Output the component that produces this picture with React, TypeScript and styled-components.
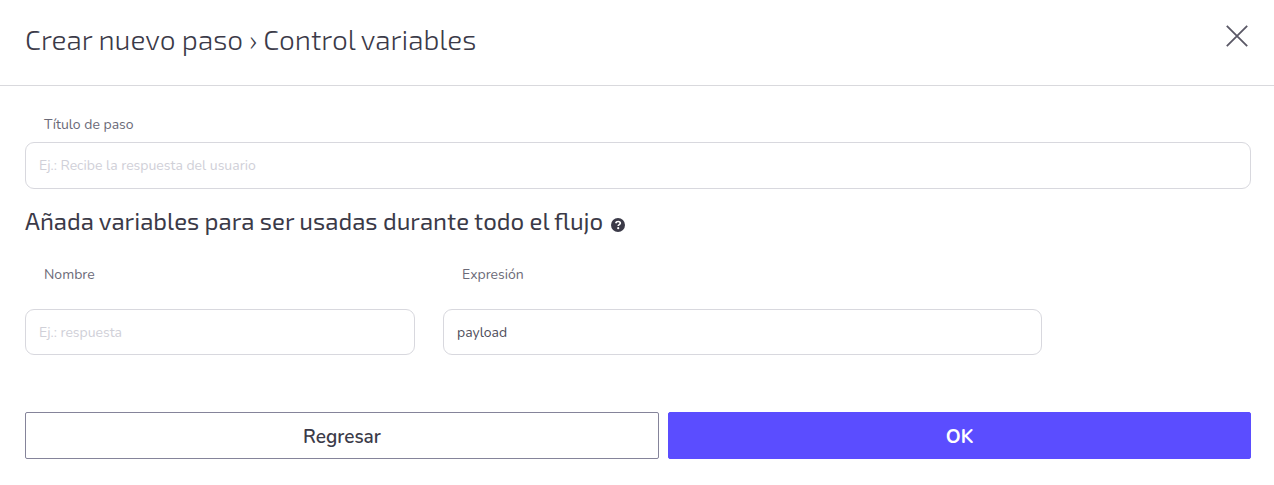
import React from "react";
import styled, { createGlobalStyle } from "styled-components";

const GlobalStyle = createGlobalStyle`
  *, *::before, *::after { box-sizing: border-box; }
  body {
    margin: 0;
    background: #fff;
    font-family: Nunito, Lato, "Open Sans", sans-serif;
    color: #3b3a48;
  }
`;

const Dialog = styled.main`
  background: #fff;
`;

const Header = styled.header`
  display: flex;
  align-items: flex-start;
  justify-content: space-between;
  padding: 19px 25px 26px;
  border-bottom: 1px solid #d9d9dd;
`;

const Title = styled.h1`
  margin: 0;
  font: 300 28px/40px "Exo 2", "Open Sans", sans-serif;
  color: #3b3a48;
`;

const CloseButton = styled.button`
  display: flex;
  margin-top: 5px;
  padding: 0;
  border: 0;
  background: none;
  color: #5a5866;
  cursor: pointer;
`;

const Form = styled.form`
  padding: 28px 23px 26px 25px;
`;

const Field = styled.div<{ $gap: number }>`
  display: flex;
  flex-direction: column;
  gap: ${(p) => p.$gap}px;
`;

const Label = styled.label`
  padding-left: 19px;
  font-size: 14px;
  line-height: 22px;
  color: #6b6a78;
`;

const TextInput = styled.input`
  width: 100%;
  height: 47px;
  padding: 0 13px;
  border: 1px solid #d8d8de;
  border-radius: 9px;
  background: #fff;
  font: inherit;
  font-size: 14px;
  color: #4f4e5b;
  outline: none;

  &::placeholder {
    color: #d0d0d8;
    opacity: 1;
  }
`;

const Subtitle = styled.h2`
  display: flex;
  align-items: center;
  gap: 8px;
  margin: 16px 0 27px;
  font: 400 24px/32px "Exo 2", "Open Sans", sans-serif;
  color: #3b3a48;
`;

const HelpIcon = styled.svg`
  margin-top: 7px;
`;

const Variables = styled.div`
  display: grid;
  grid-template-columns: 390fr 599fr 181fr;
  column-gap: 28px;

  ${TextInput} { height: 46px; }
`;

const Actions = styled.div`
  display: grid;
  grid-template-columns: 634fr 583fr;
  gap: 9px;
  margin-top: 57px;
`;

const Button = styled.button<{ $primary?: boolean }>`
  height: 47px;
  padding: 2px 0 0;
  border: 1px solid ${(p) => (p.$primary ? "#5b4dff" : "#85849a")};
  border-radius: 2px;
  background: ${(p) => (p.$primary ? "#5b4dff" : "#fff")};
  color: ${(p) => (p.$primary ? "#fff" : "#3b3a48")};
  font: inherit;
  font-size: 19px;
  font-weight: ${(p) => (p.$primary ? 700 : 600)};
  cursor: pointer;
`;

export default function App() {
  return (
    <>
      <GlobalStyle />
      <Dialog>
        <Header>
          <Title>Crear nuevo paso › Control variables</Title>
          <CloseButton type="button" aria-label="Cerrar">
            <svg width="24" height="24" viewBox="0 0 24 24" fill="none" stroke="currentColor" strokeWidth="1.8">
              <path d="M1.8 1.8 22.2 22.2M22.2 1.8 1.8 22.2" />
            </svg>
          </CloseButton>
        </Header>
        <Form onSubmit={(e) => e.preventDefault()}>
          <Field $gap={6}>
            <Label htmlFor="titulo">Título de paso</Label>
            <TextInput id="titulo" placeholder="Ej.: Recibe la respuesta del usuario" />
          </Field>
          <Subtitle>
            Añada variables para ser usadas durante todo el flujo
            <HelpIcon width="14" height="14" viewBox="0 0 14 14" aria-hidden="true">
              <circle cx="7" cy="7" r="7" fill="#3b3a48" />
              <path
                d="M4.7 5.3C5 4.1 5.9 3.5 7.1 3.5c1.3 0 2.2.7 2.2 1.8 0 1.4-2.1 1.3-2.1 2.7"
                fill="none"
                stroke="#fff"
                strokeWidth="1.7"
              />
              <circle cx="7.2" cy="10.2" r="1.1" fill="#fff" />
            </HelpIcon>
          </Subtitle>
          <Variables>
            <Field $gap={23}>
              <Label htmlFor="nombre">Nombre</Label>
              <TextInput id="nombre" placeholder="Ej.: respuesta" />
            </Field>
            <Field $gap={23}>
              <Label htmlFor="expresion">Expresión</Label>
              <TextInput id="expresion" defaultValue="payload" />
            </Field>
          </Variables>
          <Actions>
            <Button type="button">Regresar</Button>
            <Button type="submit" $primary>OK</Button>
          </Actions>
        </Form>
      </Dialog>
    </>
  );
}
